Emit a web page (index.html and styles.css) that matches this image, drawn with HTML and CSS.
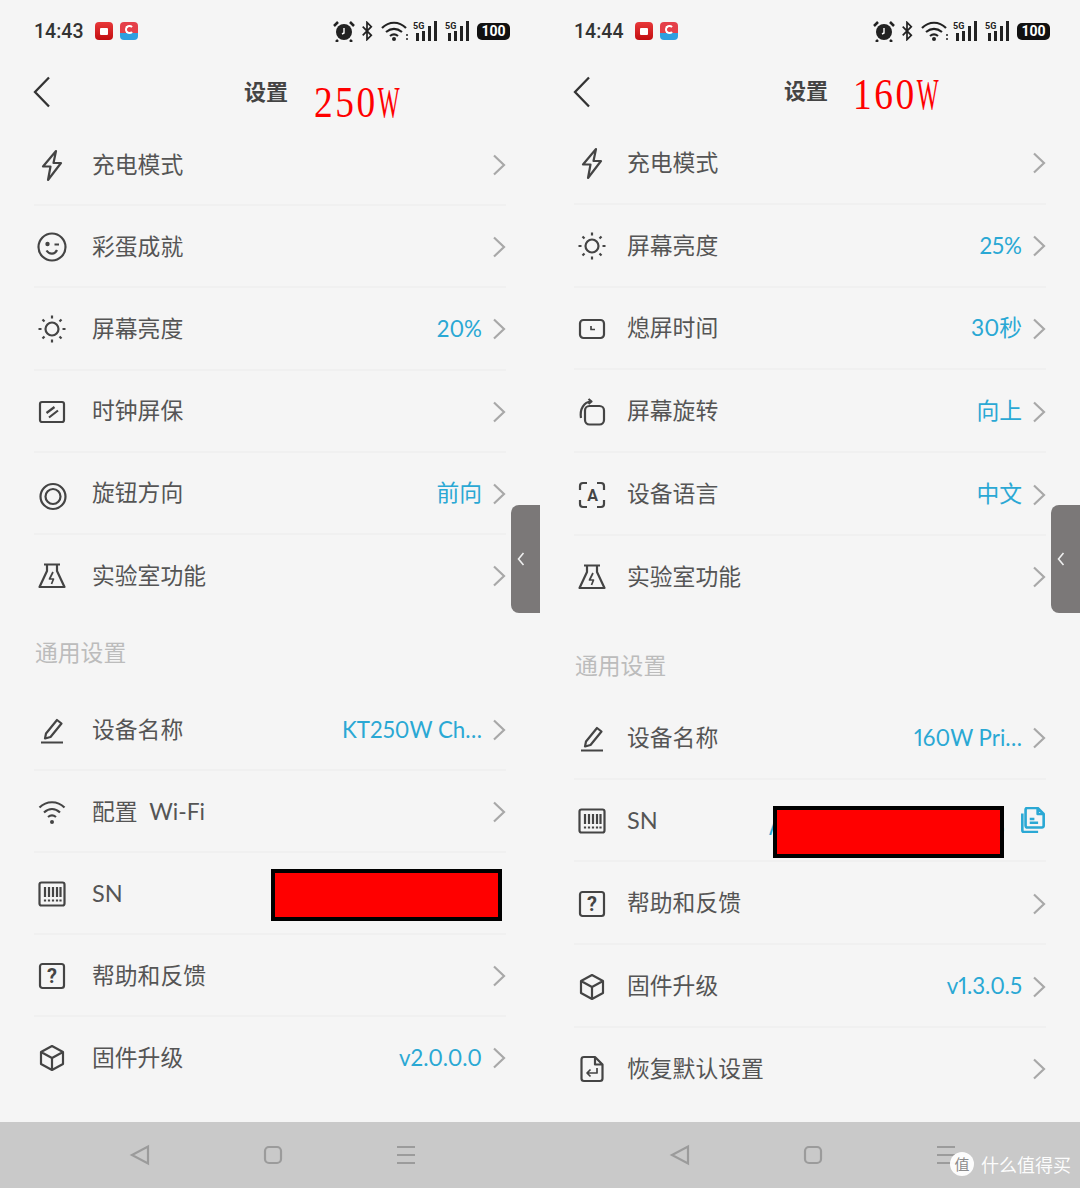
FILE: index.html
```html
<!DOCTYPE html>
<html lang="zh-CN">
<head>
  <meta charset="UTF-8" />
  <title>设置 250W / 160W</title>
  <link rel="stylesheet" href="styles.css">
</head>
<body>

  <!-- shared icons -->
  <svg class="sprite" width="0" height="0">
    <symbol id="i-bolt" viewBox="0 0 28 28"><path d="M18 0 5 15.500h7.500L10 29 23 12h-7.500z"/></symbol>
    <symbol id="i-smile" viewBox="0 0 28 28"><circle cx="14" cy="14" r="13.500"/><circle class="dot" cx="9.500" cy="11" r="2.200"/><path d="M16.500 11.500h4.500M8.500 17.500c3 4.500 8.500 4 10.500-.5"/></symbol>
    <symbol id="i-sun" viewBox="0 0 28 28"><circle cx="14" cy="14" r="6.500"/><path d="M14 .5v3M14 24.500v3M.5 14h3M24.500 14h3M4.500 4.500l2 2M21.500 21.500l2 2M4.500 23.500l2-2M21.500 6.500l2-2"/></symbol>
    <symbol id="i-saver" viewBox="0 0 28 28"><rect x="2" y="4" width="24" height="20" rx="2"/><path d="M8.500 15l8-6M11 19.500l9-7"/></symbol>
    <symbol id="i-knob" viewBox="0 0 28 28"><circle cx="15" cy="16.500" r="12.500"/><circle cx="15" cy="16.500" r="7.500"/></symbol>
    <symbol id="i-flask" viewBox="0 0 28 28"><path d="M6 2.500h16M9 2.500V9L1.500 25h25L19 9V2.500"/><path class="thin" d="M15 10l-3.500 7h4l-2 5"/></symbol>
    <symbol id="i-pen" viewBox="0 0 28 28"><path d="M8 17.500 19 4l4.500 3.500L12.500 21l-5.500 1.500zM3 26.500h22"/></symbol>
    <symbol id="i-wifi" viewBox="0 0 28 28"><path d="M1.500 9.500c7-7 18-7 25 0M6 14.500c5-4.500 11-4.500 16 0M10 19c2.500-2 5.500-2 8 0"/><circle class="dot" cx="14" cy="24" r="2"/></symbol>
    <symbol id="i-barcode" viewBox="0 0 28 28"><rect x="1.500" y="2.500" width="25" height="23" rx="2"/><path d="M7 7v10M11 7v10M15 7v10M19 7v10M22.500 7v10M7 19.500v2M11 19.500v2M15 19.500v2M19 19.500v2M22.500 19.500v2"/></symbol>
    <symbol id="i-box" viewBox="0 0 28 28"><rect x="2" y="2" width="24" height="24" rx="2.500"/></symbol>
    <symbol id="i-cube" viewBox="0 0 28 28"><path d="M14 2 25 8v12l-11 6-11-6V8zM3 8l11 6 11-6M14 14v12"/></symbol>
    <symbol id="i-timer" viewBox="0 0 28 28"><rect x="2" y="5" width="24" height="18" rx="3.500"/><path class="thin" d="M13 11v3.500h4"/></symbol>
    <symbol id="i-rotate" viewBox="0 0 28 28"><rect x="7" y="8" width="19" height="18.500" rx="4.500"/><path d="M3 20C1.500 11 6 4 13 3.500M10.500 1l3 2.500-3 2.500"/></symbol>
    <symbol id="i-brackets" viewBox="0 0 28 28"><path d="M9 2H5Q2 2 2 5v4M19 2h4q3 0 3 3v4M9 26H5q-3 0-3-3v-4M19 26h4q3 0 3-3v-4"/></symbol>
    <symbol id="i-restore" viewBox="0 0 28 28"><path d="M17 2H6Q3.500 2 3.500 4.500v19Q3.500 26 6 26h16q2.500 0 2.500-2.500V9.500zM17 2v7.500h7.500"/><path class="thin" d="M19 13v5H9M12.500 14.500 9 18l3.500 3.500"/></symbol>
    <symbol id="i-copy" viewBox="0 0 28 28"><path d="M12 1h7l6.500 6.500V20q0 2-2 2H8q-2 0-2-2V3q0-2 2-2zM19 1v6.500h6.500M2.500 7v18q0 2 2 2h15M10.500 13h5M10.500 17h9"/></symbol>
    <symbol id="i-chevron" viewBox="0 0 14 22"><path d="M2 1.500 12 11 2 20.500"/></symbol>
    <symbol id="i-bars" viewBox="0 0 26 22"><rect x="3" y="13" width="3" height="8"/><rect x="9" y="11" width="3" height="10"/><rect x="15" y="6" width="3" height="15"/><rect x="21" y="1" width="3" height="20"/></symbol>
  </svg>

  <div class="phones">

    <!-- 250W -->
    <section class="panel panel-250">
      <div class="status-bar">
        <span class="clock">14:43</span>
        <span class="app-badge app-red"><i></i></span>
        <span class="app-badge app-blue"><i></i></span>
        <div class="status-icons">
          <svg class="st-alarm" viewBox="0 0 22 22"><circle cx="11" cy="12" r="8"/><path class="hand" d="M11 8v5l-2 1"/><path class="ear" d="M1 6l4-4M21 6l-4-4M5 20l-2 2M17 20l2 2"/></svg>
          <svg class="st-bt" viewBox="0 0 14 22"><path d="M2 6l10 10-5 5V1l5 5L2 16"/></svg>
          <svg class="st-wifi" viewBox="0 0 28 20"><path d="M1 7c7-7 17-7 24 0M5 11c5-4 11-4 16 0M9 15c2.500-2 5.500-2 8 0"/><circle cx="13" cy="18" r="2"/><circle cx="26" cy="14" r="1"/><circle cx="26" cy="18" r="1"/></svg>
          <svg class="st-signal" viewBox="0 0 26 22"><use href="#i-bars"/><text x="0" y="8.500">5G</text></svg>
          <svg class="st-signal" viewBox="0 0 26 22"><use href="#i-bars"/><text x="0" y="8.500">5G</text></svg>
          <span class="battery">100</span>
        </div>
      </div>

      <header class="top-bar">
        <svg class="back" viewBox="0 0 18 32"><path d="M16 1.500 2 16l14 14.500"/></svg>
        <h1>设置</h1>
        <span class="watt-tag">250<span class="watt-w">W</span></span>
      </header>

      <ul class="menu">
        <li class="row"><svg class="icon"><use href="#i-bolt"/></svg><span class="name">充电模式</span><svg class="chev"><use href="#i-chevron"/></svg></li>
        <li class="row"><svg class="icon"><use href="#i-smile"/></svg><span class="name">彩蛋成就</span><svg class="chev"><use href="#i-chevron"/></svg></li>
        <li class="row"><svg class="icon"><use href="#i-sun"/></svg><span class="name">屏幕亮度</span><span class="value">20%</span><svg class="chev"><use href="#i-chevron"/></svg></li>
        <li class="row"><svg class="icon"><use href="#i-saver"/></svg><span class="name">时钟屏保</span><svg class="chev"><use href="#i-chevron"/></svg></li>
        <li class="row"><svg class="icon"><use href="#i-knob"/></svg><span class="name">旋钮方向</span><span class="value value-cjk">前向</span><svg class="chev"><use href="#i-chevron"/></svg></li>
        <li class="row"><svg class="icon"><use href="#i-flask"/></svg><span class="name">实验室功能</span><svg class="chev"><use href="#i-chevron"/></svg></li>
      </ul>

      <div class="group-label">通用设置</div>

      <ul class="menu">
        <li class="row"><svg class="icon"><use href="#i-pen"/></svg><span class="name">设备名称</span><span class="value">KT250W Ch…</span><svg class="chev"><use href="#i-chevron"/></svg></li>
        <li class="row"><svg class="icon"><use href="#i-wifi"/></svg><span class="name">配置&nbsp; Wi-Fi</span><svg class="chev"><use href="#i-chevron"/></svg></li>
        <li class="row"><svg class="icon"><use href="#i-barcode"/></svg><span class="name name-latin">SN</span><div class="redact redact-250"></div></li>
        <li class="row"><svg class="icon" viewBox="0 0 28 28"><use href="#i-box"/><text class="icon-text icon-text-lg" x="14" y="21" text-anchor="middle">?</text></svg><span class="name">帮助和反馈</span><svg class="chev"><use href="#i-chevron"/></svg></li>
        <li class="row"><svg class="icon"><use href="#i-cube"/></svg><span class="name">固件升级</span><span class="value">v2.0.0.0</span><svg class="chev"><use href="#i-chevron"/></svg></li>
      </ul>

      <div class="side-tab"><svg viewBox="0 0 10 16"><path d="M7.500 2 2.500 8l5 6"/></svg></div>

      <nav class="nav-bar">
        <svg viewBox="0 0 22 22"><path d="M19 2.500v17L3 11z"/></svg>
        <svg viewBox="0 0 22 22"><rect x="3" y="3" width="16" height="16" rx="4"/></svg>
        <svg viewBox="0 0 22 22"><path d="M2 3h18M2 11h18M2 19h18"/></svg>
      </nav>
    </section>

    <!-- 160W -->
    <section class="panel panel-160">
      <div class="status-bar">
        <span class="clock">14:44</span>
        <span class="app-badge app-red"><i></i></span>
        <span class="app-badge app-blue"><i></i></span>
        <div class="status-icons">
          <svg class="st-alarm" viewBox="0 0 22 22"><circle cx="11" cy="12" r="8"/><path class="hand" d="M11 8v5l-2 1"/><path class="ear" d="M1 6l4-4M21 6l-4-4M5 20l-2 2M17 20l2 2"/></svg>
          <svg class="st-bt" viewBox="0 0 14 22"><path d="M2 6l10 10-5 5V1l5 5L2 16"/></svg>
          <svg class="st-wifi" viewBox="0 0 28 20"><path d="M1 7c7-7 17-7 24 0M5 11c5-4 11-4 16 0M9 15c2.500-2 5.500-2 8 0"/><circle cx="13" cy="18" r="2"/><circle cx="26" cy="14" r="1"/><circle cx="26" cy="18" r="1"/></svg>
          <svg class="st-signal" viewBox="0 0 26 22"><use href="#i-bars"/><text x="0" y="8.500">5G</text></svg>
          <svg class="st-signal" viewBox="0 0 26 22"><use href="#i-bars"/><text x="0" y="8.500">5G</text></svg>
          <span class="battery">100</span>
        </div>
      </div>

      <header class="top-bar">
        <svg class="back" viewBox="0 0 18 32"><path d="M16 1.500 2 16l14 14.500"/></svg>
        <h1>设置</h1>
        <span class="watt-tag">160<span class="watt-w">W</span></span>
      </header>

      <ul class="menu">
        <li class="row"><svg class="icon"><use href="#i-bolt"/></svg><span class="name">充电模式</span><svg class="chev"><use href="#i-chevron"/></svg></li>
        <li class="row"><svg class="icon"><use href="#i-sun"/></svg><span class="name">屏幕亮度</span><span class="value">25%</span><svg class="chev"><use href="#i-chevron"/></svg></li>
        <li class="row"><svg class="icon"><use href="#i-timer"/></svg><span class="name">熄屏时间</span><span class="value value-cjk">30秒</span><svg class="chev"><use href="#i-chevron"/></svg></li>
        <li class="row"><svg class="icon"><use href="#i-rotate"/></svg><span class="name">屏幕旋转</span><span class="value value-cjk">向上</span><svg class="chev"><use href="#i-chevron"/></svg></li>
        <li class="row"><svg class="icon" viewBox="0 0 28 28"><use href="#i-brackets"/><text class="icon-text" x="14.500" y="19.500" text-anchor="middle">A</text></svg><span class="name">设备语言</span><span class="value value-cjk">中文</span><svg class="chev"><use href="#i-chevron"/></svg></li>
        <li class="row"><svg class="icon"><use href="#i-flask"/></svg><span class="name">实验室功能</span><svg class="chev"><use href="#i-chevron"/></svg></li>
      </ul>

      <div class="group-label">通用设置</div>

      <ul class="menu">
        <li class="row"><svg class="icon"><use href="#i-pen"/></svg><span class="name">设备名称</span><span class="value">160W Pri…</span><svg class="chev"><use href="#i-chevron"/></svg></li>
        <li class="row"><svg class="icon"><use href="#i-barcode"/></svg><span class="name name-latin">SN</span><div class="sn-ends"><span>A</span><span>5</span></div><svg class="copy"><use href="#i-copy"/></svg><div class="redact redact-160"></div></li>
        <li class="row"><svg class="icon" viewBox="0 0 28 28"><use href="#i-box"/><text class="icon-text icon-text-lg" x="14" y="21" text-anchor="middle">?</text></svg><span class="name">帮助和反馈</span><svg class="chev"><use href="#i-chevron"/></svg></li>
        <li class="row"><svg class="icon"><use href="#i-cube"/></svg><span class="name">固件升级</span><span class="value">v1.3.0.5</span><svg class="chev"><use href="#i-chevron"/></svg></li>
        <li class="row"><svg class="icon"><use href="#i-restore"/></svg><span class="name">恢复默认设置</span><svg class="chev"><use href="#i-chevron"/></svg></li>
      </ul>

      <div class="side-tab"><svg viewBox="0 0 10 16"><path d="M7.500 2 2.500 8l5 6"/></svg></div>

      <nav class="nav-bar">
        <svg viewBox="0 0 22 22"><path d="M19 2.500v17L3 11z"/></svg>
        <svg viewBox="0 0 22 22"><rect x="3" y="3" width="16" height="16" rx="4"/></svg>
        <svg viewBox="0 0 22 22"><path d="M2 3h18M2 11h18M2 19h18"/></svg>
      </nav>

      <!-- site watermark -->
      <div class="watermark"><span class="wm-badge">值</span><span>什么值得买</span></div>
    </section>

  </div>

</body>
</html>
```

FILE: styles.css
```css
* { box-sizing: border-box; }

body {
  margin: 0;
  background: #f5f5f5;
  color: #555;
  font-family: 'Lato', 'Noto Sans CJK SC', sans-serif;
  overflow: hidden;
}

.sprite { position: absolute; }
symbol { overflow: visible; }

.phones {
  display: grid;
  grid-template-columns: 540px 540px;
  width: 1080px;
  height: 1188px;
}

.panel {
  position: relative;
  display: flex;
  flex-direction: column;
  height: 1188px;
  overflow: hidden;
}

.panel-250 {
  --head-h: 62px;
  --row-h: 82.2px;
  --row-h2: 82px;
  --name-gap: 18px;
  --label-h: 72px;
  --label-top: 20px;
  --line-left: 34px;
}

.panel-160 {
  --head-h: 60px;
  --row-h: 82.8px;
  --row-h2: 82.8px;
  --name-gap: 13px;
  --label-h: 78px;
  --label-top: 31px;
  --line-left: 34px;
}

/* status bar */
.status-bar {
  display: flex;
  align-items: center;
  height: 62px;
  padding: 0 30px 0 34px;
}

.clock {
  width: 61px;
  font-family: 'Roboto', sans-serif;
  font-size: 19.500px;
  font-weight: 500;
  color: #333;
}

.app-badge {
  display: flex;
  align-items: center;
  justify-content: center;
  width: 18px;
  height: 18px;
  margin-right: 7px;
  border-radius: 4px;
}

.app-red { background: linear-gradient(#e8383a, #c30d10); }
.app-red i { width: 8px; height: 7px; background: #fff; border-radius: 1px; }
.app-blue { background: linear-gradient(#e5404a 62%, #2f9fe0 63%); }
.app-blue i { width: 9px; height: 9px; border: 2px solid #fff; border-right-color: transparent; border-radius: 50%; margin-top: -4px; }

.status-icons {
  display: flex;
  align-items: center;
  margin-left: auto;
}

.status-icons svg { display: block; fill: none; }

.st-alarm { width: 22px; height: 22px; margin-right: 6px; }
.st-alarm circle { fill: #222; }
.st-alarm .hand { stroke: #fff; stroke-width: 1.400; }
.st-alarm .ear { stroke: #222; stroke-width: 2.500; }

.st-bt { width: 12px; height: 20px; margin-right: 8px; stroke: #222; stroke-width: 2; }

.st-wifi { width: 28px; height: 20px; margin-right: 4px; stroke: #222; stroke-width: 2.200; }
.st-wifi circle { fill: #222; stroke: none; }

.status-icons .st-signal { width: 26px; height: 22px; margin-right: 6px; fill: #222; }
.st-signal text { font: 700 9px 'Roboto', sans-serif; fill: #222; }

.battery {
  width: 33px;
  height: 17px;
  border-radius: 5px;
  background: #111;
  color: #fff;
  font: 700 14px/17px 'Roboto', sans-serif;
  text-align: center;
}

/* title row */
.top-bar {
  position: relative;
  display: flex;
  align-items: center;
  justify-content: center;
  height: var(--head-h);
  padding: 0 42px 6px 34px;
}

.back {
  position: absolute;
  left: 33px;
  top: 14px;
  width: 18px;
  height: 32px;
  fill: none;
  stroke: #333;
  stroke-width: 2.300;
}

.top-bar h1 {
  margin: 0;
  font-family: 'Noto Sans CJK SC', sans-serif;
  font-size: 22px;
  font-weight: 700;
  color: #444;
}

.watt-tag {
  position: absolute;
  left: 314px;
  top: 12px;
  font-family: 'Liberation Serif', serif;
  font-size: 44px;
  line-height: 58px;
  letter-spacing: 3px;
  color: #f00;
  white-space: nowrap;
  transform: scaleX(.85);
  transform-origin: left center;
}

.panel-160 .watt-tag { left: 313px; top: 4px; }

.watt-w {
  display: inline-block;
  width: 26px;
  letter-spacing: 0;
  transform: scaleX(.62);
  transform-origin: left center;
}

/* setting rows */
.menu {
  list-style: none;
  margin: 0;
  padding: 0 34px 0 var(--line-left);
}

.row {
  position: relative;
  display: flex;
  align-items: center;
  height: var(--row-h);
  border-bottom: 2px solid #f0f0f0;
  font-family: 'Noto Sans CJK SC', sans-serif;
  font-size: 22.800px;
}

.group-label + .menu .row { height: var(--row-h2); }
.menu .row:last-child { border-bottom-color: transparent; }

.icon {
  flex: none;
  width: 28px;
  height: 28px;
  margin-top: 2px;
  margin-left: 4px;
  margin-right: var(--name-gap);
  overflow: visible;
  fill: none;
  stroke: #444;
  stroke-width: 2.200;
  stroke-linejoin: round;
}

symbol .dot { fill: #444; stroke: none; }
symbol .thin { stroke-width: 1.700; }

.icon-text {
  fill: #444;
  stroke: none;
  font: 700 16px 'Roboto', sans-serif;
}

.icon-text-lg { font-size: 20px; }

.name {
  margin-left: 8px;
  margin-bottom: 2px;
  color: #555;
  font-family: 'Lato', 'Noto Sans CJK SC', sans-serif;
}

.name-latin { margin-bottom: 0; font-size: 23.500px; }

.value {
  margin-left: auto;
  margin-right: 10px;
  color: #2aa8d4;
  font-family: 'Lato', 'Noto Sans CJK SC', sans-serif;
  font-size: 22.300px;
  font-feature-settings: "pnum";
}

.value-cjk { margin-bottom: 3px; font-size: 22.800px; }

.chev {
  flex: none;
  width: 14px;
  height: 22px;
  margin-top: 2px;
  fill: none;
  stroke: #a8a8a8;
  stroke-width: 2.200;
}

.name + .chev { margin-left: auto; }

.copy {
  width: 26px;
  height: 26px;
  margin-left: auto;
  fill: none;
  stroke: #2aa8d4;
  stroke-width: 2.800;
  stroke-linejoin: round;
}

.group-label {
  height: var(--label-h);
  padding-top: var(--label-top);
  padding-left: 35px;
  font-family: 'Noto Sans CJK SC', sans-serif;
  font-size: 22.800px;
  line-height: 30px;
  color: #bcbcbc;
}

/* masks over the serial numbers */
.redact {
  position: absolute;
  top: 16px;
  width: 231px;
  height: 52px;
  background: #f00;
  border: 4px solid #000;
}

.redact-250 { left: 237px; }
.redact-160 { left: 199px; top: 26px; }

.sn-ends {
  position: absolute;
  left: 195px;
  top: 30px;
  display: flex;
  justify-content: space-between;
  width: 236px;
  color: #2aa8d4;
  font-size: 22px;
  line-height: 30px;
}

/* grey pull tab */
.side-tab {
  position: absolute;
  right: 0;
  top: 505px;
  display: flex;
  align-items: center;
  width: 29px;
  height: 108px;
  padding-left: 5px;
  border-radius: 8px 0 0 8px;
  background: #7b7878;
}

.side-tab svg {
  width: 10px;
  height: 16px;
  fill: none;
  stroke: #eee;
  stroke-width: 1.600;
}

/* android nav */
.nav-bar {
  position: absolute;
  left: 0;
  right: 0;
  bottom: 0;
  display: flex;
  align-items: center;
  justify-content: center;
  gap: 111px;
  height: 66px;
  padding-left: 6px;
  background: #c9c9c9;
}

.nav-bar svg {
  width: 22px;
  height: 22px;
  fill: none;
  stroke: #9b9b9b;
  stroke-width: 2.200;
}

.watermark {
  position: absolute;
  left: 410px;
  bottom: 11px;
  display: flex;
  align-items: center;
  gap: 7px;
  color: #fff;
  font-family: 'Noto Sans CJK SC', sans-serif;
  font-size: 18px;
  opacity: .95;
}

.wm-badge {
  width: 24px;
  height: 24px;
  border-radius: 50%;
  background: #fff;
  color: #888;
  font-size: 15px;
  line-height: 24px;
  text-align: center;
}
```
